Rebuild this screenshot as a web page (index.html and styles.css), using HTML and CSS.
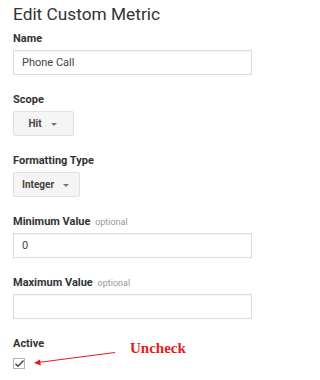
FILE: index.html
```html
<!DOCTYPE html>
<html>
<head>
<meta charset="utf-8">
<link rel="stylesheet" href="styles.css">
</head>
<body>
<div class="page">
  <h1 class="title">Edit Custom Metric</h1>
  <div class="field">
    <div class="label">Name</div>
    <div class="input">Phone Call</div>
  </div>
  <div class="field">
    <div class="label">Scope</div>
    <div class="select"><span>Hit</span><span class="caret"></span></div>
  </div>
  <div class="field">
    <div class="label">Formatting Type</div>
    <div class="select"><span>Integer</span><span class="caret"></span></div>
  </div>
  <div class="field">
    <div class="label">Minimum Value <span class="opt">optional</span></div>
    <div class="input">0</div>
  </div>
  <div class="field">
    <div class="label">Maximum Value <span class="opt">optional</span></div>
    <div class="input"></div>
  </div>
  <div class="field last">
    <div class="label">Active</div>
    <div class="check">
      <svg width="12" height="11" viewBox="0 0 12 11"><path d="M2.5 5.8 L5 8.2 L10.5 2.5" fill="none" stroke="#444" stroke-width="1.5"/></svg>
    </div>
  </div>
  <svg class="arrow" width="268" height="380" viewBox="0 0 268 380">
    <line x1="115" y1="352.5" x2="38" y2="362.5" stroke="#e51b1b" stroke-width="1"/>
    <path d="M34 363 L40 359.6 L40.8 365.4 Z" fill="#e51b1b"/>
  </svg>
  <div class="note">Uncheck</div>
</div>
</body>
</html>
```
FILE: styles.css
```css
html, body {
  margin: 0;
  padding: 0;
  background: #fff;
}
.page {
  position: relative;
  width: 268px;
  height: 380px;
  padding: 2px 0 0 13px;
  box-sizing: border-box;
  font-family: Roboto, Arial, sans-serif;
  color: #333;
}
.title {
  margin: 0 0 6px 0;
  font-size: 17.3px;
  font-weight: 400;
  line-height: 24px;
  color: #333;
}
.field {
  display: flex;
  flex-direction: column;
  align-items: flex-start;
  margin-bottom: 18px;
}
.label {
  font-size: 11px;
  font-weight: 700;
  line-height: 14px;
  color: #333;
  margin-bottom: 4px;
}
.opt {
  font-size: 9px;
  font-weight: 400;
  color: #999;
  margin-left: 2px;
}
.input {
  width: 239px;
  height: 25px;
  box-sizing: border-box;
  border: 1px solid #dcdcdc;
  box-shadow: inset 0 1px 1px rgba(0,0,0,0.04);
  padding: 0 8px;
  font-size: 11px;
  line-height: 23px;
  color: #444;
}
.select {
  display: flex;
  align-items: center;
  justify-content: center;
  gap: 9px;
  min-width: 61px;
  height: 25px;
  box-sizing: border-box;
  padding: 0 10px 0 8px;
  border: 1px solid #e0e0e0;
  border-radius: 2px;
  background: #f5f5f5;
  font-size: 10px;
  font-weight: 700;
  color: #444;
}
.caret {
  width: 0;
  height: 0;
  border-left: 3px solid transparent;
  border-right: 3px solid transparent;
  border-top: 3px solid #777;
  margin-top: 2px;
}
.last .label {
  margin-bottom: 7px;
}
.check {
  width: 12px;
  height: 11px;
  box-sizing: border-box;
  border: 1px solid #b5b5b5;
  background: #fff;
  display: flex;
}
.check svg {
  margin: -1px;
}
.arrow {
  position: absolute;
  left: 0;
  top: 0;
  pointer-events: none;
}
.note {
  position: absolute;
  left: 130px;
  top: 340px;
  font-family: "Liberation Serif", "Times New Roman", serif;
  font-weight: 700;
  font-size: 15px;
  line-height: 17px;
  color: #e51b1b;
}
```
